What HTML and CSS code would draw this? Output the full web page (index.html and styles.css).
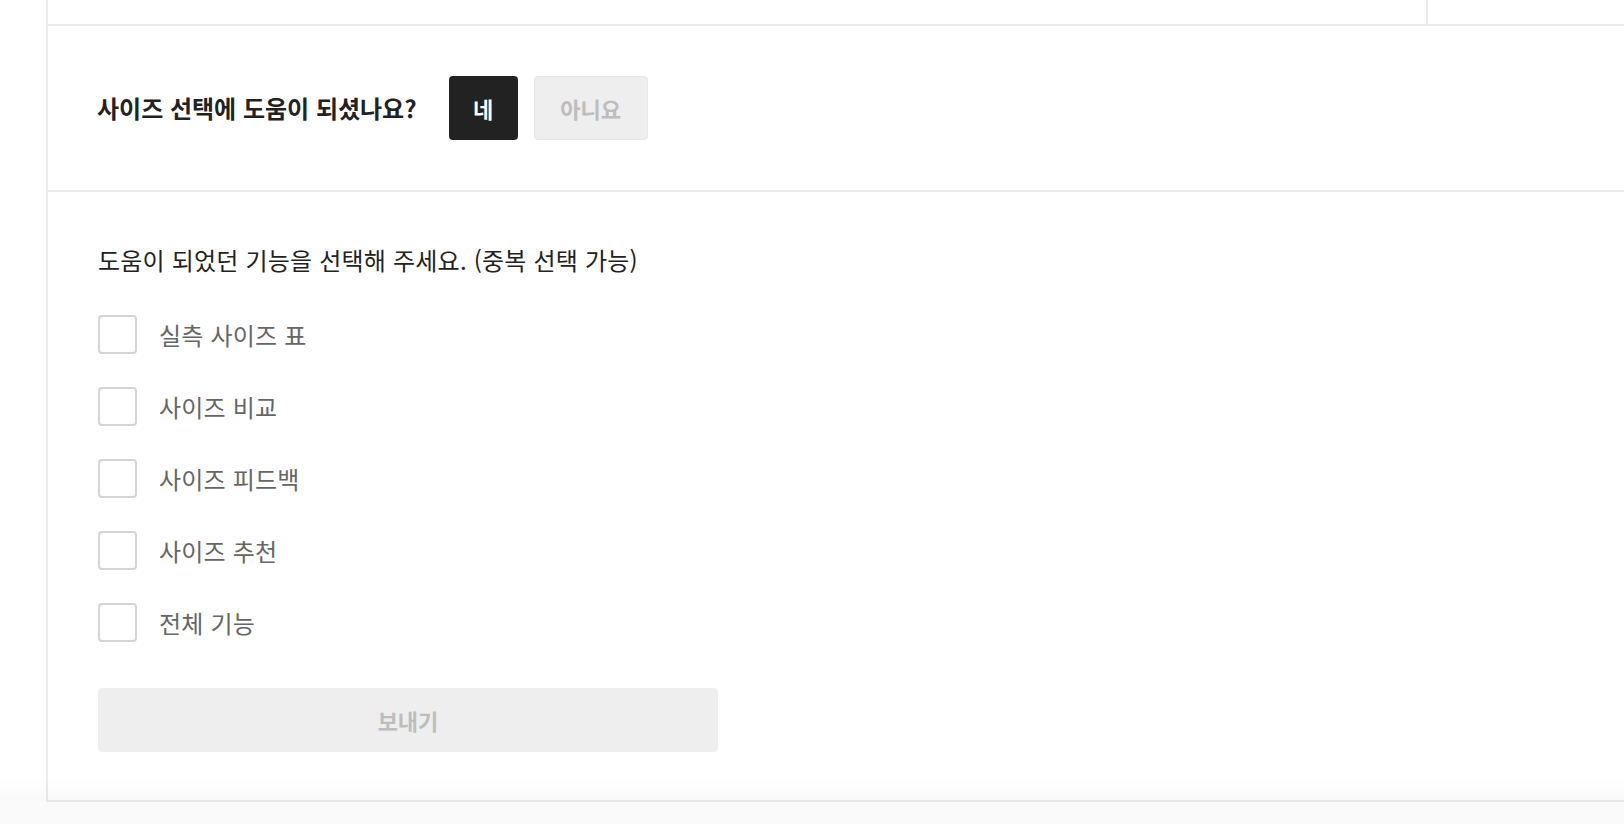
FILE: index.html
```html
<!DOCTYPE html>
<html lang="ko">
<head>
<meta charset="utf-8">
<title>사이즈 피드백</title>
<link rel="stylesheet" href="styles.css">
</head>
<body>
<div class="page">
  <div class="card">
    <div class="top-row">
      <div class="top-cell"></div>
      <div class="top-cell top-cell-right"></div>
    </div>
    <section class="question">
      <p class="question-text">사이즈 선택에 도움이 되셨나요?</p>
      <button class="btn btn-yes" type="button">네</button>
      <button class="btn btn-no" type="button">아니요</button>
    </section>
    <section class="features">
      <p class="features-title">도움이 되었던 기능을 선택해 주세요. (중복 선택 가능)</p>
      <ul class="options">
        <li class="option"><span class="checkbox"></span><span class="option-label">실측 사이즈 표</span></li>
        <li class="option"><span class="checkbox"></span><span class="option-label">사이즈 비교</span></li>
        <li class="option"><span class="checkbox"></span><span class="option-label">사이즈 피드백</span></li>
        <li class="option"><span class="checkbox"></span><span class="option-label">사이즈 추천</span></li>
        <li class="option"><span class="checkbox"></span><span class="option-label">전체 기능</span></li>
      </ul>
      <button class="submit" type="button">보내기</button>
    </section>
  </div>
</div>
<div class="bottom-fade"></div>
</body>
</html>
```
FILE: styles.css
```css
html, body {
  margin: 0;
  padding: 0;
  background: #ffffff;
  overflow: hidden;
}

body {
  font-family: "Noto Sans CJK KR", "Noto Sans", sans-serif;
  color: #222222;
}

.page {
  padding-left: 46px;
}

.card {
  border-left: 2px solid #ebebeb;
  border-bottom: 2px solid #ebebeb;
  margin-right: -40px;
  background: #ffffff;
}

.top-row {
  display: grid;
  grid-template-columns: 1378px 1fr;
  height: 24px;
  border-bottom: 2px solid #ebebeb;
}

.top-cell-right {
  border-left: 2px solid #ebebeb;
}

.question {
  display: flex;
  align-items: center;
  padding: 50px 0 50px 49px;
  border-bottom: 2px solid #ebebeb;
}

.question-text {
  margin: 0 32px 0 0;
  font-size: 24px;
  font-weight: 700;
  letter-spacing: 0;
  line-height: 32px;
  color: #222222;
}

.btn {
  height: 64px;
  border: 0;
  border-radius: 4px;
  font-family: inherit;
  font-size: 22px;
  font-weight: 700;
  padding: 0;
  margin: 0;
}

.btn-yes {
  background: #222222;
  color: #ffffff;
  width: 69px;
}

.btn-no {
  margin-left: 16px;
  width: 114px;
  background: #eeeeee;
  border: 1px solid #e6e6e6;
  color: #bdbdbd;
}

.features {
  padding: 52px 0 48px 50px;
}

.features-title {
  margin: 0 0 39px;
  font-size: 24px;
  line-height: 32px;
  letter-spacing: 0.2px;
  color: #222222;
}

.options {
  list-style: none;
  margin: 0;
  padding: 0;
  display: flex;
  flex-direction: column;
  gap: 33px;
}

.option {
  display: flex;
  align-items: center;
  height: 39px;
  gap: 22px;
}

.checkbox {
  box-sizing: border-box;
  width: 39px;
  height: 39px;
  border: 2px solid #d4d4d4;
  border-radius: 4px;
  background: #ffffff;
}

.option-label {
  font-size: 24px;
  line-height: 32px;
  letter-spacing: 0.2px;
  color: #666666;
}

.submit {
  display: block;
  margin-top: 46px;
  width: 620px;
  height: 64px;
  border: 0;
  border-radius: 4px;
  background: #eeeeee;
  color: #bdbdbd;
  font-family: inherit;
  font-size: 22px;
  font-weight: 700;
}

.bottom-fade {
  position: fixed;
  left: 0;
  right: 0;
  bottom: 0;
  height: 50px;
  background: linear-gradient(to bottom, rgba(0, 0, 0, 0) 0, rgba(0, 0, 0, 0.02) 26px);
  pointer-events: none;
}
```
